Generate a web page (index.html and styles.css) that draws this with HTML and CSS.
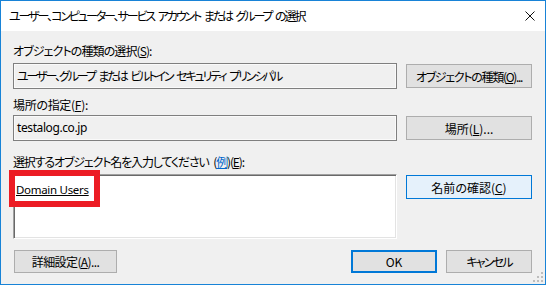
FILE: index.html
```html
<!DOCTYPE html>
<html lang="ja">
<head>
<meta charset="utf-8">
<link rel="stylesheet" href="styles.css">
</head>
<body>
<div class="window">
  <div class="titlebar">
    <span class="title">ユーザー、コンピューター、サービス アカウント または グループ の選択</span>
    <svg class="close" width="10" height="10" viewBox="0 0 10 10"><path d="M0.5 0.5L9.5 9.5M9.5 0.5L0.5 9.5" stroke="#111" stroke-width="1"/></svg>
  </div>
  <div class="content">
    <div class="section">
      <div class="label l1 t-kind">オブジェクトの種類の選択(<u>S</u>):</div>
      <div class="row">
        <div class="field t-kana">ユーザー、グループ または ビルトイン セキュリティ プリンシパル</div>
        <div class="btn t-objbtn">オブジェクトの種類(<u>O</u>)...</div>
      </div>
    </div>
    <div class="section s2">
      <div class="label l2">場所の指定(<u>F</u>):</div>
      <div class="row">
        <div class="field latin">testalog.co.jp</div>
        <div class="btn">場所(<u>L</u>)...</div>
      </div>
    </div>
    <div class="section s3">
      <div class="label l1 t-enter">選択するオブジェクト名を入力してください (<span class="link">例</span>)(<u>E</u>):</div>
      <div class="row top">
        <div class="editbox">
          <span class="name">Domain Users</span>
          <div class="highlight"></div>
        </div>
        <div class="btn check">名前の確認(<u>C</u>)</div>
      </div>
    </div>
  </div>
  <div class="footer">
    <div class="btn small adv">詳細設定(<u>A</u>)...</div>
    <div class="spacer"></div>
    <div class="btn small ok">OK</div>
    <div class="btn small t-cancel">キャンセル</div>
  </div>
  <svg class="grip" width="11" height="11" viewBox="0 0 11 11">
    <rect x="8" y="0" width="2" height="2" fill="#bdbdbd"/>
    <rect x="4" y="4" width="2" height="2" fill="#bdbdbd"/>
    <rect x="8" y="4" width="2" height="2" fill="#bdbdbd"/>
    <rect x="0" y="8" width="2" height="2" fill="#bdbdbd"/>
    <rect x="4" y="8" width="2" height="2" fill="#bdbdbd"/>
    <rect x="8" y="8" width="2" height="2" fill="#bdbdbd"/>
  </svg>
</div>
</body>
</html>
```
FILE: styles.css
```css
html, body {
  margin: 0;
  padding: 0;
  background: #ffffff;
}
body {
  font-family: "Noto Sans CJK JP", "Noto Sans", sans-serif;
  font-size: 12px;
  color: #000;
  font-feature-settings: "palt";
}
u {
  text-decoration: underline;
  text-underline-offset: 1px;
}
.window {
  width: 546px;
  height: 285px;
  box-sizing: border-box;
  border: 1px solid #1883d7;
  background: #f0f0f0;
  display: flex;
  flex-direction: column;
  position: relative;
}
.titlebar {
  height: 30px;
  background: #ffffff;
  display: flex;
  align-items: center;
  justify-content: space-between;
  padding: 0 10px 0 8px;
  flex: none;
}
.title {
  line-height: 16px;
  letter-spacing: -2.1px;
  word-spacing: 3px;
  white-space: nowrap;
}
.content {
  padding: 12px 13px 0 12px;
}
.label {
  height: 16px;
  line-height: 16px;
  white-space: nowrap;
}
.l1 { margin-bottom: 4px; }
.l2 { margin-bottom: 2px; letter-spacing: -0.3px; }
.s2 { margin-top: 8px; }
.s3 { margin-top: 13px; }
.t-kind { letter-spacing: -0.9px; }
.t-enter { letter-spacing: -1.15px; word-spacing: 3px; }
.t-kana { letter-spacing: -2.1px; word-spacing: 3px; }
.t-objbtn { letter-spacing: -1.3px; }
.t-cancel { letter-spacing: -1.8px; }
.row {
  display: flex;
  align-items: center;
  gap: 9px;
}
.row.top {
  align-items: flex-start;
}
.field {
  flex: 1;
  height: 26px;
  box-sizing: border-box;
  border: 1px solid #7f7f7f;
  box-shadow: inset 0 0 0 1px #fafafa;
  background: #f0f0f0;
  padding: 0 3px;
  line-height: 24px;
  white-space: nowrap;
}
.btn {
  width: 126px;
  height: 24px;
  box-sizing: border-box;
  border: 1px solid #adadad;
  background: #e1e1e1;
  display: flex;
  align-items: center;
  justify-content: center;
  white-space: nowrap;
  flex: none;
}
.btn.check {
  margin-top: 1px;
  background: #e5f1fb;
  border-color: #0078d7;
}
.editbox {
  flex: 1;
  height: 65px;
  box-sizing: border-box;
  background: #ffffff;
  border: 1px solid;
  border-color: #a0a0a0 #ffffff #ffffff #a0a0a0;
  box-shadow: inset 1px 1px 0 #696969, inset -1px -1px 0 #e3e3e3;
  padding: 6px 2px 0 2px;
  position: relative;
  line-height: 16px;
}
.name {
  text-decoration: underline;
  text-underline-offset: 1px;
  font-family: "Noto Sans", "Noto Sans CJK JP", sans-serif;
  font-size: 11.5px;
  letter-spacing: -0.3px;
}
.highlight {
  position: absolute;
  left: -5px;
  top: -5px;
  width: 91px;
  height: 37px;
  box-sizing: border-box;
  border: 6px solid #ec1c24;
}
.link {
  color: #0066cc;
  text-decoration: underline;
  text-underline-offset: 1px;
}
.latin {
  font-family: "Noto Sans", "Noto Sans CJK JP", sans-serif;
  letter-spacing: -0.4px;
}
.footer {
  margin-top: 11px;
  padding: 0 13px 0 13px;
  display: flex;
  gap: 9px;
}
.spacer {
  flex: 1;
}
.btn.small {
  width: 86px;
  height: 23px;
}
.btn.adv {
  width: 103px;
  letter-spacing: -0.6px;
}
.btn.ok {
  border: 2px solid #0078d7;
}
.grip {
  position: absolute;
  right: 1px;
  bottom: 1px;
}
```
